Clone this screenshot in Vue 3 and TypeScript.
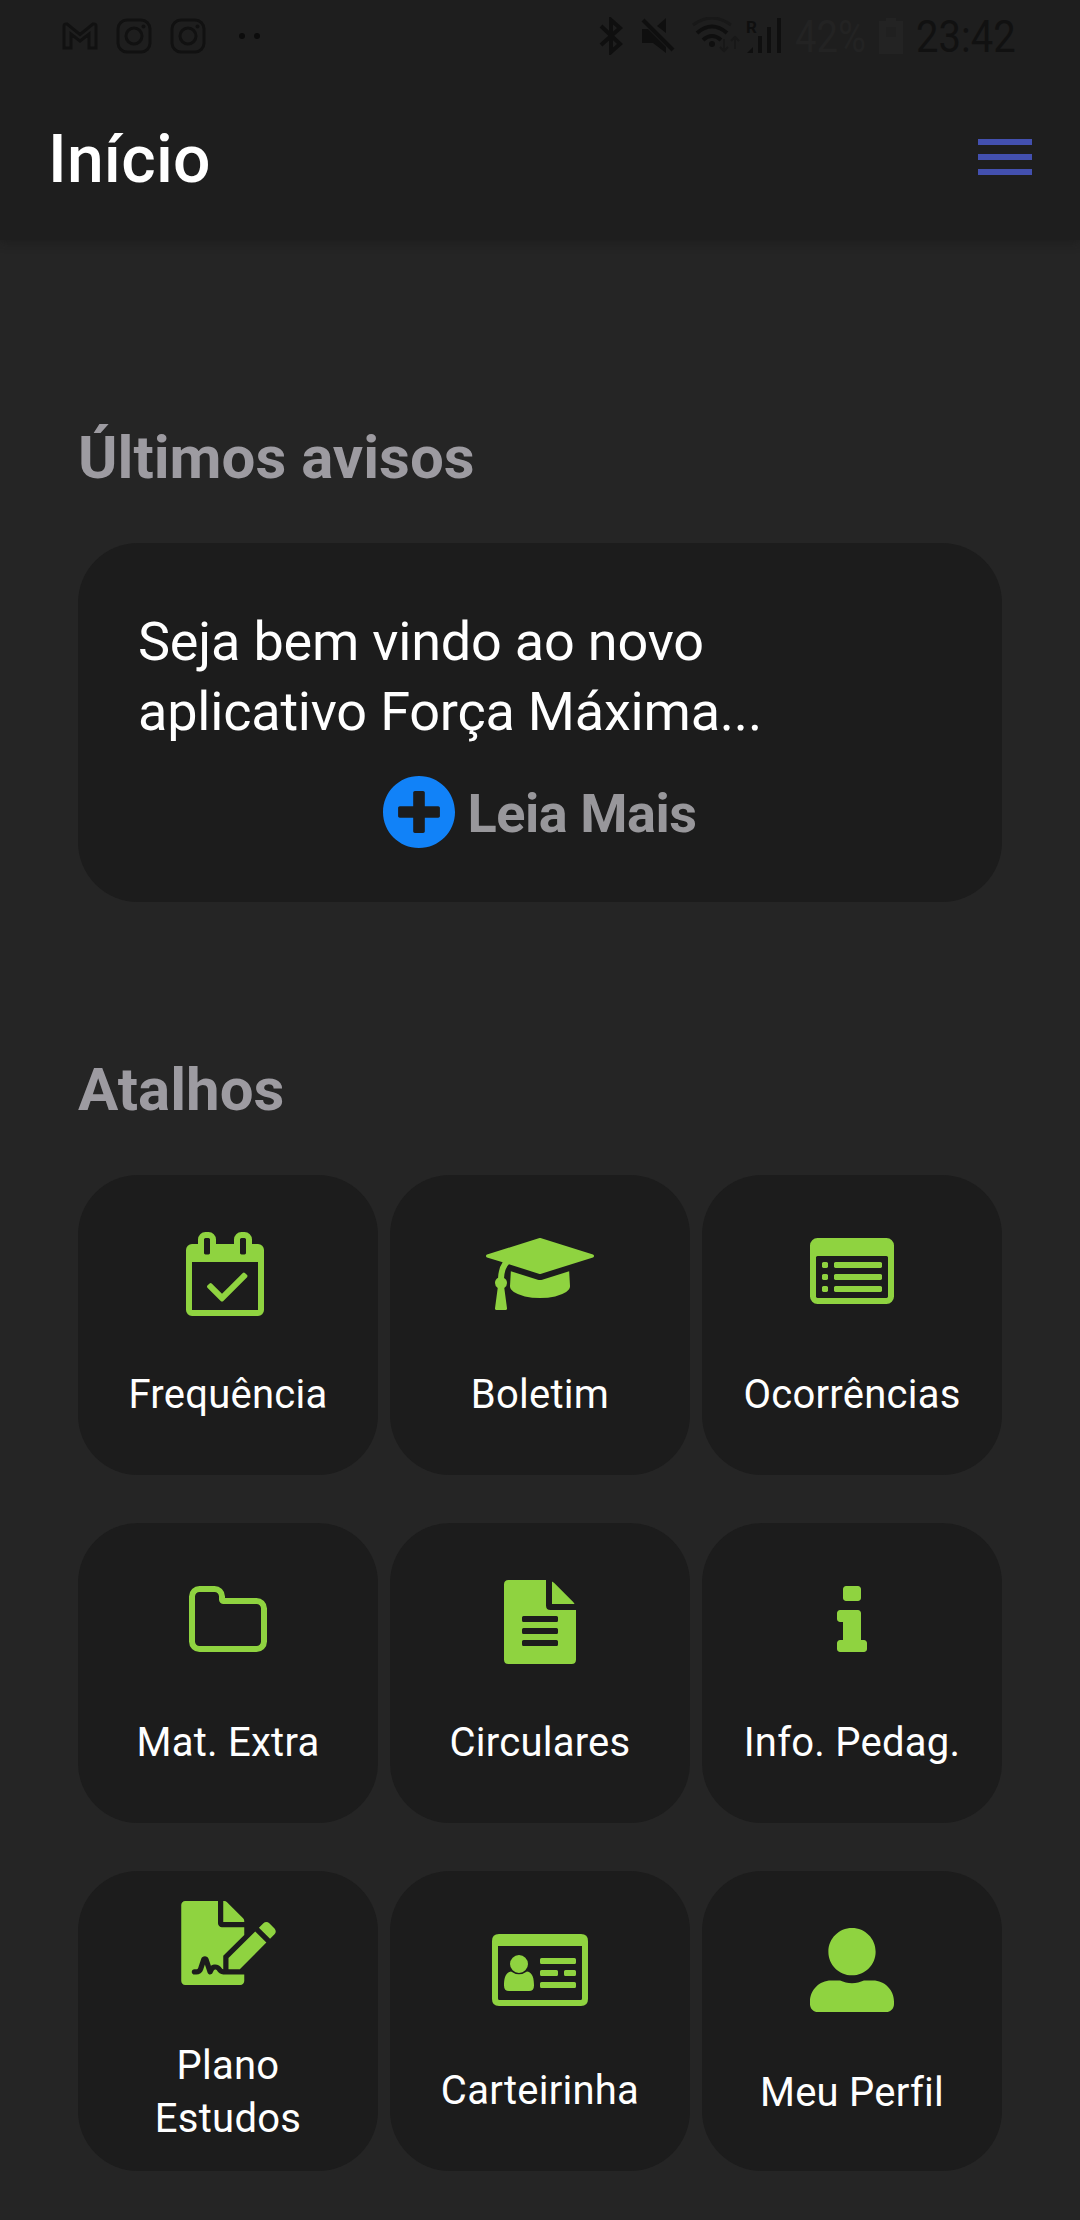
<script setup lang="ts">
interface Shortcut {
  id: string
  label: string
  viewBox: string
  width: number
  path: string
}

const shortcuts: Shortcut[] = [
  {
    id: 'frequencia',
    label: 'Frequência',
    viewBox: '0 0 1792 1792',
    width: 84,
    path: 'M1303 964l-512 512q-10 9-23 9t-23-9l-288-288q-9-10-9-23t9-22l46-46q9-9 22-9t23 9l220 220 444-444q10-9 23-9t22 9l46 46q9 9 9 22t-9 23zm-1175 700h1408v-1024h-1408v1024zm384-1216v-288q0-14-9-23t-23-9h-64q-14 0-23 9t-9 23v288q0 14 9 23t23 9h64q14 0 23-9t9-23zm768 0v-288q0-14-9-23t-23-9h-64q-14 0-23 9t-9 23v288q0 14 9 23t23 9h64q14 0 23-9t9-23zm384-64v1280q0 52-38 90t-90 38h-1408q-52 0-90-38t-38-90v-1280q0-52 38-90t90-38h128v-96q0-66 47-113t113-47h64q66 0 113 47t47 113v96h384v-96q0-66 47-113t113-47h64q66 0 113 47t47 113v96h128q52 0 90 38t38 90z',
  },
  {
    id: 'boletim',
    label: 'Boletim',
    viewBox: '0 0 2304 1792',
    width: 108,
    path: 'M1774 836l18 316q4 69-82 128t-235 93.5-323 34.5-323-34.5-235-93.5-82-128l18-316 574 181q22 7 48 7t48-7zm530-324q0 23-22 31l-1120 352q-4 1-10 1t-10-1l-652-206q-43 34-71 111.5t-34 178.5q63 36 63 109 0 69-58 107l58 433q2 14-8 25-9 11-24 11h-192q-15 0-24-11-10-11-8-25l58-433q-58-38-58-107 0-73 65-111 11-207 98-330l-333-104q-22-8-22-31t22-31l1120-352q4-1 10-1t10 1l1120 352q22 8 22 31z',
  },
  {
    id: 'ocorrencias',
    label: 'Ocorrências',
    viewBox: '0 0 1792 1792',
    width: 84,
    path: 'M384 1184v64q0 13-9.5 22.5t-22.5 9.5h-64q-13 0-22.5-9.5t-9.5-22.5v-64q0-13 9.5-22.5t22.5-9.5h64q13 0 22.5 9.5t9.5 22.5zm0-256v64q0 13-9.5 22.5t-22.5 9.5h-64q-13 0-22.5-9.5t-9.5-22.5v-64q0-13 9.5-22.5t22.5-9.5h64q13 0 22.5 9.5t9.5 22.5zm0-256v64q0 13-9.5 22.5t-22.5 9.5h-64q-13 0-22.5-9.5t-9.5-22.5v-64q0-13 9.5-22.5t22.5-9.5h64q13 0 22.5 9.5t9.5 22.5zm1152 512v64q0 13-9.5 22.5t-22.5 9.5h-960q-13 0-22.5-9.5t-9.5-22.5v-64q0-13 9.5-22.5t22.5-9.5h960q13 0 22.5 9.5t9.5 22.5zm0-256v64q0 13-9.5 22.5t-22.5 9.5h-960q-13 0-22.5-9.5t-9.5-22.5v-64q0-13 9.5-22.5t22.5-9.5h960q13 0 22.5 9.5t9.5 22.5zm0-256v64q0 13-9.5 22.5t-22.5 9.5h-960q-13 0-22.5-9.5t-9.5-22.5v-64q0-13 9.5-22.5t22.5-9.5h960q13 0 22.5 9.5t9.5 22.5zm128 704v-832q0-13-9.5-22.5t-22.5-9.5h-1472q-13 0-22.5 9.5t-9.5 22.5v832q0 13 9.5 22.5t22.5 9.5h1472q13 0 22.5-9.5t9.5-22.5zm128-1088v1088q0 66-47 113t-113 47h-1472q-66 0-113-47t-47-113v-1088q0-66 47-113t113-47h1472q66 0 113 47t47 113z',
  },
  {
    id: 'material',
    label: 'Mat. Extra',
    viewBox: '0 0 1664 1792',
    width: 78,
    path: 'M1536 1312v-704q0-40-28-68t-68-28h-704q-40 0-68-28t-28-68v-64q0-40-28-68t-68-28h-320q-40 0-68 28t-28 68v960q0 40 28 68t68 28h1216q40 0 68-28t28-68zm128-704v704q0 92-66 158t-158 66h-1216q-92 0-158-66t-66-158v-960q0-92 66-158t158-66h320q92 0 158 66t66 158v32h672q92 0 158 66t66 158z',
  },
  {
    id: 'circulares',
    label: 'Circulares',
    viewBox: '0 0 72 84',
    width: 72,
    path: 'M4.5 0H42V25.500Q42 30 46.500 30H72V79.500Q72 84 67.500 84H4.500Q0 84 0 79.500V4.500Q0 0 4.500 0ZM48 1.400Q49.200 2 50 2.800L69.200 22Q70 22.800 70.600 24H48ZM19.500 36Q18 36 18 37.500V40.500Q18 42 19.500 42H52.500Q54 42 54 40.500V37.500Q54 36 52.500 36ZM19.500 48Q18 48 18 49.500V52.500Q18 54 19.500 54H52.500Q54 54 54 52.500V49.500Q54 48 52.500 48ZM19.500 60Q18 60 18 61.500V64.500Q18 66 19.500 66H52.500Q54 66 54 64.500V61.500Q54 60 52.500 60Z',
  },
  {
    id: 'info',
    label: 'Info. Pedag.',
    viewBox: '0 0 640 1792',
    width: 30,
    path: 'M640 1344v128q0 26-19 45t-45 19h-512q-26 0-45-19t-19-45v-128q0-26 19-45t45-19h64v-384h-64q-26 0-45-19t-19-45v-128q0-26 19-45t45-19h384q26 0 45 19t19 45v576h64q26 0 45 19t19 45zm-128-1152v192q0 26-19 45t-45 19h-256q-26 0-45-19t-19-45v-192q0-26 19-45t45-19h256q26 0 45 19t19 45z',
  },
  {
    id: 'plano',
    label: 'Plano Estudos',
    viewBox: '0 0 576 512',
    width: 95,
    path: 'M218.170 424.140c-2.950-5.920-8.090-6.520-10.170-6.520s-7.220.590-10.020 6.190l-7.670 15.340c-6.370 12.780-25.030 11.370-29.480-2.090L144 386.590l-10.610 31.880c-5.890 17.660-22.380 29.530-41 29.530H80c-8.840 0-16-7.160-16-16s7.160-16 16-16h12.390c4.830 0 9.110-3.080 10.640-7.660l18.190-54.640c3.300-9.810 12.440-16.410 22.780-16.410s19.480 6.590 22.770 16.410l13.880 41.640c19.750-16.190 54.060-9.700 66 14.160 1.890 3.780 5.490 5.950 9.360 6.260v-82.120l128-127.090V160H248c-13.200 0-24-10.800-24-24V0H24C10.700 0 0 10.700 0 24v464c0 13.300 10.700 24 24 24h336c13.300 0 24-10.700 24-24v-40l-128-.11c-16.120-.31-30.580-9.280-37.830-23.750zM384 121.900c0-6.300-2.500-12.400-7-16.900L279.100 7c-4.500-4.500-10.600-7-17-7H256v128h128v-6.100zm-96 225.060V416h68.990l161.680-162.780-67.880-67.880L288 346.960zm280.540-179.630l-31.870-31.870c-9.940-9.940-26.070-9.940-36.010 0l-27.250 27.250 67.880 67.880 27.250-27.250c9.950-9.940 9.950-26.070 0-36.010z',
  },
  {
    id: 'carteirinha',
    label: 'Carteirinha',
    viewBox: '0 -6 96 84',
    width: 96,
    path: 'M7 0H89Q96 0 96 7V65Q96 72 89 72H7Q0 72 0 65V7Q0 0 7 0ZM6 12V64.500Q6 66 7.500 66H88.500Q90 66 90 64.500V12ZM27 21A9 9 0 0 1 27 39A9 9 0 0 1 27 21ZM19 37.500Q27 43.200 35 37.500C41 38.200 42 45.500 42 51.500Q42 57 37 57H17Q12 57 12 51.500C12 45.500 13 38.200 19 37.500ZM49.500 24H82.500Q84 24 84 25.500V28.500Q84 30 82.500 30H49.500Q48 30 48 28.500V25.500Q48 24 49.500 24ZM49.500 36H64.500Q66 36 66 37.500V40.500Q66 42 64.500 42H49.500Q48 42 48 40.500V37.500Q48 36 49.500 36ZM73.500 36H82.500Q84 36 84 37.500V40.500Q84 42 82.500 42H73.500Q72 42 72 40.500V37.500Q72 36 73.500 36ZM49.500 48H82.500Q84 48 84 49.500V52.500Q84 54 82.500 54H49.500Q48 54 48 52.500V49.500Q48 48 49.500 48Z',
  },
  {
    id: 'perfil',
    label: 'Meu Perfil',
    viewBox: '0 0 512 512',
    width: 84,
    path: 'M256 288c79.500 0 144-64.500 144-144S335.500 0 256 0 112 64.500 112 144s64.500 144 144 144zm128 32h-55.100c-22.200 10.200-46.900 16-72.900 16s-50.600-5.800-72.900-16H128C57.300 320 0 377.300 0 448v16c0 26.500 21.500 48 48 48h416c26.500 0 48-21.500 48-48v-16c0-70.700-57.300-128-128-128z',
  },
]
</script>

<template>
  <div class="screen">
    <header class="top">
      <div class="status">
        <svg class="gmail" width="36" height="28" viewBox="0 0 36 28">
          <path d="M2 26V4Q2 1.500 5 2L18 12.500 31 2Q34 1.500 34 4V26H27V12L18 19 9 12V26Z" />
        </svg>
        <svg class="insta" width="36" height="36" viewBox="0 0 36 36">
          <rect x="2" y="2" width="32" height="32" rx="9" />
          <circle cx="18" cy="18" r="8" />
          <circle cx="27.500" cy="8.500" r="2" class="solid" />
        </svg>
        <svg class="insta" width="36" height="36" viewBox="0 0 36 36">
          <rect x="2" y="2" width="32" height="32" rx="9" />
          <circle cx="18" cy="18" r="8" />
          <circle cx="27.500" cy="8.500" r="2" class="solid" />
        </svg>
        <span class="dots"><i></i><i></i></span>

        <div class="system">
          <svg width="24" height="38" viewBox="0 0 24 38">
            <path class="line" d="M2 9L21 27 12 35V3L21 11 2 28" />
          </svg>
          <svg class="mute" width="36" height="38" viewBox="0 0 36 38">
            <path class="fill" d="M2 12H8L26 30V36L13 26H2ZM17 9L26 1V16Z" />
            <path class="line" d="M3 3L33 33" />
          </svg>
          <svg class="wifi" width="50" height="38" viewBox="0 0 50 38">
            <path class="dim" d="M2 8Q21-6 40 8" />
            <path class="line" d="M6 16Q21 3 36 16M12 23Q21 15 30 23" />
            <circle class="fill" cx="21" cy="27" r="3" />
            <path class="dim thin" d="M33 22V34M29 30L33 34 37 30M44 32V20M40 24L44 20 48 24" />
          </svg>
          <span class="signal">
            <svg width="36" height="38" viewBox="0 0 36 38">
              <path class="fill" d="M1 36L7 30V36ZM12 19H16V36H12ZM21 10H25V36H21ZM31 1H35V36H31Z" />
            </svg>
            <b>R</b>
          </span>
          <span class="percent"><em>42%</em></span>
          <svg class="battery" width="24" height="38" viewBox="0 0 24 38">
            <path d="M7 1H17V4H24V37H0V4H7Z" />
            <path class="charge" d="M7 10H17V20H7Z" />
          </svg>
          <span class="clock"><em>23:42</em></span>
        </div>
      </div>

      <div class="bar">
        <h1>Início</h1>
        <button class="menu" aria-label="Menu">
          <i></i><i></i><i></i>
        </button>
      </div>
    </header>

    <main>
      <h2>Últimos avisos</h2>
      <section class="notice">
        <p>Seja bem vindo ao novo<br />aplicativo Força Máxima...</p>
        <a class="more">
          <svg width="72" height="72" viewBox="8 8 496 496">
            <path d="M256 8C119 8 8 119 8 256s111 248 248 248 248-111 248-248S393 8 256 8zm144 276c0 6.600-5.400 12-12 12h-92v92c0 6.600-5.400 12-12 12h-56c-6.600 0-12-5.400-12-12v-92h-92c-6.600 0-12-5.400-12-12v-56c0-6.600 5.400-12 12-12h92v-92c0-6.600 5.400-12 12-12h56c6.600 0 12 5.400 12 12v92h92c6.600 0 12 5.400 12 12v56z" />
          </svg>
          <span>Leia Mais</span>
        </a>
      </section>

      <h2>Atalhos</h2>
      <section class="grid">
        <a v-for="s in shortcuts" :key="s.id" class="tile" :class="s.id">
          <svg :width="s.width" height="84" :viewBox="s.viewBox">
            <path :d="s.path" fill-rule="evenodd" />
          </svg>
          <span>{{ s.label }}</span>
        </a>
      </section>
    </main>
  </div>
</template>

<style>
body {
  margin: 0;
  background: #252525;
}
</style>

<style scoped>
.screen {
  width: 1080px;
  height: 2220px;
  overflow: hidden;
  background: #252525;
  color: #fff;
  font-family: Roboto, "Liberation Sans", sans-serif;
}

.top {
  position: relative;
  height: 240px;
  background: #1e1e1e;
  box-shadow: 0 2px 10px rgba(20, 20, 20, 0.45);
}

.status {
  display: flex;
  align-items: center;
  height: 72px;
  padding: 0 64px 0 62px;
  box-sizing: border-box;
}

.gmail,
.insta {
  fill: none;
  stroke: #111;
  stroke-width: 3;
}

.gmail {
  margin-right: 18px;
}

.insta {
  margin-right: 18px;
}

.insta .solid {
  fill: #111;
  stroke: none;
}

.dots {
  display: flex;
  gap: 9px;
  margin-left: 15px;
}

.dots i {
  width: 6px;
  height: 6px;
  border-radius: 50%;
  background: #0c0c0c;
}

.system {
  display: flex;
  align-items: center;
  margin-left: auto;
}

.line {
  fill: none;
  stroke: #0f0f0f;
  stroke-width: 4;
}

.fill {
  fill: #0f0f0f;
}

.dim {
  fill: none;
  stroke: #181818;
  stroke-width: 3;
}

.thin {
  stroke-width: 2;
}

.mute {
  margin-left: 17px;
}

.wifi {
  margin-left: 15px;
}

.signal {
  position: relative;
  display: flex;
  margin-left: 5px;
}

.signal b {
  position: absolute;
  left: 0;
  top: 2px;
  font-size: 17px;
  line-height: 17px;
  color: #0f0f0f;
}

.percent,
.clock {
  display: flex;
  width: 72px;
  margin-left: 13px;
  font-size: 45px;
  line-height: 53px;
  color: #232323;
}

.percent em,
.clock em {
  font-style: normal;
  transform: scaleX(0.89);
  transform-origin: 0 50%;
}

.percent em {
  transform: scaleX(0.85);
}

.battery {
  margin-left: 12px;
  fill: #232323;
}

.battery .charge {
  fill: #202020;
}

.clock {
  width: 100px;
  color: #111;
}

.bar {
  display: flex;
  align-items: center;
  justify-content: space-between;
  height: 168px;
  padding: 0 48px;
}

h1 {
  margin: 7px 0 0;
  font-size: 66px;
  line-height: 78px;
  font-weight: 500;
  letter-spacing: 0.2px;
}

.menu {
  display: flex;
  flex-direction: column;
  gap: 9px;
  width: 54px;
  margin: 2px 0 0;
  padding: 0;
  border: 0;
  background: none;
}

.menu i {
  height: 6px;
  background: #4350af;
}

main {
  padding: 183px 78px 0;
}

h2 {
  margin: 0;
  font-size: 60px;
  line-height: 70px;
  font-weight: 700;
  color: #9d9ba1;
}

.notice {
  height: 359px;
  margin: 50px 0 153px;
  padding: 64px 60px 0;
  box-sizing: border-box;
  border-radius: 60px;
  background: #1c1c1c;
}

.notice p {
  margin: 0;
  font-size: 54px;
  line-height: 70px;
  letter-spacing: -0.2px;
}

.more {
  display: flex;
  justify-content: center;
  align-items: center;
  gap: 12px;
  margin-top: 28px;
  font-size: 54px;
  line-height: 70px;
  font-weight: 700;
  letter-spacing: -0.45px;
  color: #98979b;
}

.more svg {
  fill: #1182f8;
}

.more span {
  padding-top: 4px;
}

.grid {
  display: grid;
  grid-template-columns: repeat(3, 300px);
  gap: 48px 12px;
  margin-top: 50px;
}

.tile {
  display: flex;
  flex-direction: column;
  align-items: center;
  height: 300px;
  padding: 57px 30px 0;
  box-sizing: border-box;
  border-radius: 60px;
  background: #1c1c1c;
}

.tile svg {
  flex: none;
  fill: #8fd340;
}

.tile span {
  margin-top: 52px;
  font-size: 40px;
  line-height: 53px;
  letter-spacing: 0.25px;
  text-align: center;
  white-space: nowrap;
}

.tile.plano {
  padding: 30px 60px 0;
}

.tile.plano span {
  margin-top: 54px;
  white-space: normal;
}

.tile.perfil span {
  margin-top: 54px;
}
</style>
